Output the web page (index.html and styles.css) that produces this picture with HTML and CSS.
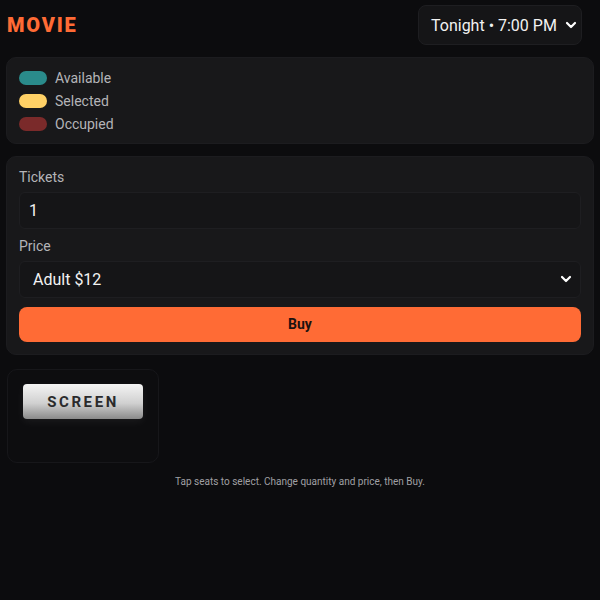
FILE: index.html
```html
<!DOCTYPE html>
<html>
<head>
<meta charset="utf-8">
<link rel="stylesheet" href="styles.css">
</head>
<body>
<div class="app">
  <header class="top">
    <h1 class="logo">MOVIE</h1>
    <div class="showtime">
      <span>Tonight • 7:00 PM</span>
      <svg class="chev" width="12" height="8" viewBox="0 0 12 8"><path d="M2 2l4 4 4-4" fill="none" stroke="#fff" stroke-width="2.2" stroke-linecap="round" stroke-linejoin="round"/></svg>
    </div>
  </header>

  <section class="card legend">
    <div class="legend-row"><span class="sw sw-av"></span><span>Available</span></div>
    <div class="legend-row"><span class="sw sw-sel"></span><span>Selected</span></div>
    <div class="legend-row"><span class="sw sw-occ"></span><span>Occupied</span></div>
  </section>

  <section class="card form">
    <label class="lbl">Tickets</label>
    <div class="field"><span class="val-num">1</span></div>
    <label class="lbl">Price</label>
    <div class="field field-select">
      <span class="val">Adult $12</span>
      <svg class="chev" width="12" height="8" viewBox="0 0 12 8"><path d="M2 2l4 4 4-4" fill="none" stroke="#fff" stroke-width="2.2" stroke-linecap="round" stroke-linejoin="round"/></svg>
    </div>
    <div class="buy">Buy</div>
  </section>

  <section class="hall">
    <div class="screen">SCREEN</div>
  </section>

  <p class="hint">Tap seats to select. Change quantity and price, then Buy.</p>
</div>
</body>
</html>
```

FILE: styles.css
```css
html, body {
  margin: 0;
  padding: 0;
  background: #0c0c0e;
  font-family: Roboto, "Noto Sans", sans-serif;
  color: #e6e6e6;
}
.app {
  padding: 5px 6px;
  display: flex;
  flex-direction: column;
}
.top {
  display: flex;
  justify-content: space-between;
  align-items: center;
  height: 40px;
  padding-right: 12px;
}
.logo {
  margin: 0;
  padding-left: 1px;
  font-size: 20px;
  font-weight: 900;
  letter-spacing: 1.8px;
  color: #ff6b35;
}
.showtime {
  box-sizing: border-box;
  width: 164px;
  height: 40px;
  display: flex;
  align-items: center;
  justify-content: space-between;
  padding: 0 4px 0 12px;
  background: #151517;
  border: 1px solid #1e1e21;
  border-radius: 8px;
  font-size: 16px;
  color: #f2f2f2;
  white-space: nowrap;
}
.chev { display: block; flex: none; }
.card {
  background: #18181a;
  border: 1px solid #1c1c1f;
  border-radius: 10px;
  padding: 12px;
}
.legend {
  margin-top: 12px;
  display: flex;
  flex-direction: column;
  gap: 9px;
  padding-top: 12.5px;
  padding-bottom: 12.5px;
}
.legend-row {
  display: flex;
  align-items: center;
  gap: 8px;
  font-size: 14px;
  color: #b4b4b8;
  height: 14px;
}
.sw {
  width: 28px;
  height: 14px;
  border-radius: 7px;
}
.sw-av { background: #2a8b8b; }
.sw-sel { background: #ffd166; }
.sw-occ { background: #7a2a2a; }
.form {
  margin-top: 12px;
  display: flex;
  flex-direction: column;
  padding-top: 11.5px;
  padding-bottom: 12.5px;
}
.lbl {
  font-size: 14px;
  color: #b4b4b8;
  line-height: 16px;
  margin-bottom: 7px;
}
.field {
  box-sizing: border-box;
  height: 37px;
  display: flex;
  align-items: center;
  justify-content: space-between;
  padding: 0 9px 0 9px;
  background: #151517;
  border: 1px solid #1e1e21;
  border-radius: 6px;
  font-size: 16px;
  color: #f2f2f2;
  margin-bottom: 9px;
}
.field-select { padding: 0 8px 0 13px; margin-bottom: 9px; }
.buy {
  height: 35px;
  display: flex;
  align-items: center;
  justify-content: center;
  background: #ff6b35;
  border-radius: 8px;
  font-size: 14px;
  font-weight: 700;
  color: #1b1210;
}
.hall {
  margin-top: 14px;
  margin-left: 1px;
  width: 152px;
  height: 94px;
  box-sizing: border-box;
  border: 1px solid #17171a;
  border-radius: 10px;
  background: #0d0d0f;
  padding: 14px 15px;
}
.screen {
  width: 120px;
  height: 35px;
  display: flex;
  align-items: center;
  justify-content: center;
  border-radius: 4px;
  background: linear-gradient(#f4f4f4 0%, #d0d0d0 55%, #8a8a8a 100%);
  font-size: 15px;
  font-weight: 700;
  letter-spacing: 2.6px;
  color: #2a2a2c;
  box-shadow: 0 3px 8px rgba(255,255,255,0.06);
}
.hint {
  margin: 13px 0 0;
  text-align: center;
  font-size: 10px;
  color: #a0a0a4;
}
```
